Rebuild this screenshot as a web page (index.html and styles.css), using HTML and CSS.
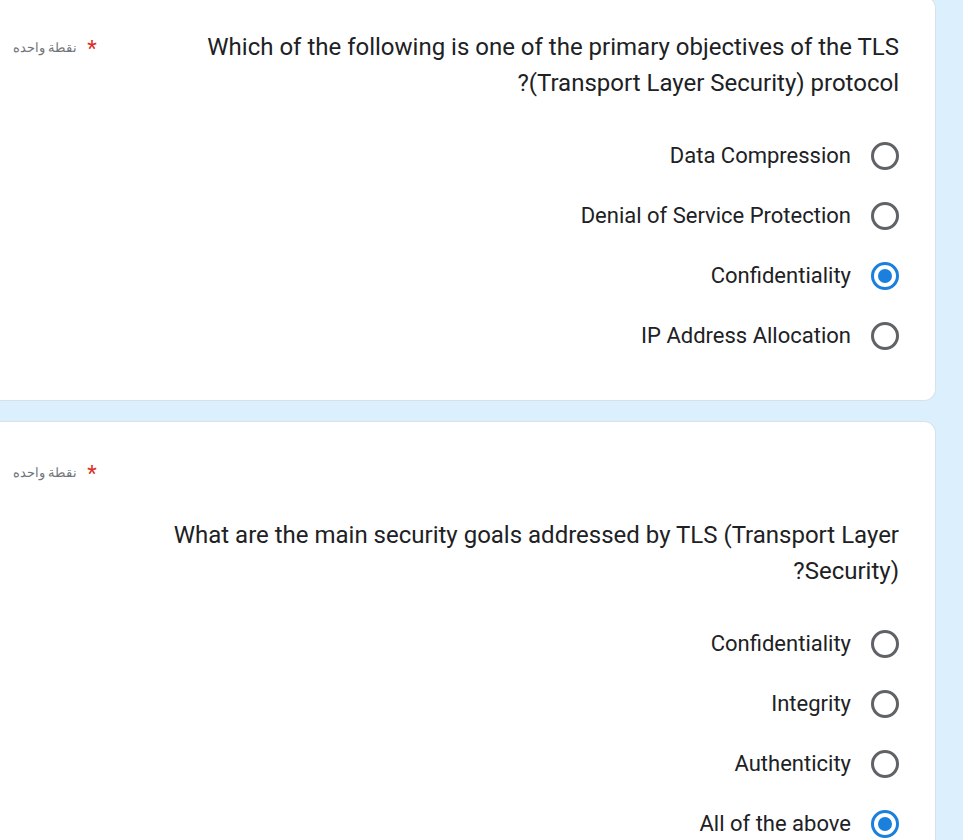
FILE: index.html
```html
<!DOCTYPE html>
<html lang="ar" dir="rtl">
<head>
<meta charset="utf-8">
<link rel="stylesheet" href="styles.css">
</head>
<body>
<main class="page">
  <section class="card card-first">
    <div class="q-header">
      <div class="q-title">Which of the following is one of the primary objectives of the TLS (Transport Layer Security) protocol?</div>
      <div class="q-points"><span class="star">*</span><span class="pts">نقطة واحده</span></div>
    </div>
    <div class="options">
      <label class="opt"><span class="radio"></span><span class="opt-text">Data Compression</span></label>
      <label class="opt"><span class="radio"></span><span class="opt-text">Denial of Service Protection</span></label>
      <label class="opt"><span class="radio checked"></span><span class="opt-text">Confidentiality</span></label>
      <label class="opt"><span class="radio"></span><span class="opt-text">IP Address Allocation</span></label>
    </div>
  </section>
  <section class="card">
    <div class="q-header">
      <div class="q-title"></div>
      <div class="q-points"><span class="star">*</span><span class="pts">نقطة واحده</span></div>
    </div>
    <div class="q-title q-title-block">What are the main security goals addressed by TLS (Transport Layer Security)?</div>
    <div class="options">
      <label class="opt"><span class="radio"></span><span class="opt-text">Confidentiality</span></label>
      <label class="opt"><span class="radio"></span><span class="opt-text">Integrity</span></label>
      <label class="opt"><span class="radio"></span><span class="opt-text">Authenticity</span></label>
      <label class="opt"><span class="radio checked"></span><span class="opt-text">All of the above</span></label>
    </div>
  </section>
</main>
</body>
</html>
```
FILE: styles.css
```css
html, body {
  margin: 0;
  padding: 0;
}
body {
  background: #dbeffc;
  font-family: Roboto, "Noto Sans", sans-serif;
  color: #202124;
  overflow: hidden;
  height: 840px;
}
.page {
  padding-right: 27px;
  display: flex;
  flex-direction: column;
  gap: 20px;
  width: 963px;
  box-sizing: border-box;
}
.card {
  background: #fff;
  border: 1px solid #d6e2ea;
  border-left: none;
  border-radius: 0 12px 12px 0;
  padding: 32px 36px 34px 13px;
}
.card-first {
  margin-top: -4px;
}
.q-header {
  display: flex;
  align-items: flex-start;
  justify-content: space-between;
  gap: 20px;
}
.q-title {
  font-size: 24px;
  line-height: 36px;
  width: 779px;
  text-align: right;
}
.q-title-block {
  margin-top: 27px;
  margin-right: 0;
  margin-left: auto;
}
.q-points {
  display: flex;
  align-items: center;
  gap: 10px;
  height: 36px;
  flex-shrink: 0;
}
.star {
  color: #d93025;
  font-size: 22px;
  line-height: 36px;
  padding-top: 4px;
}
.pts {
  font-size: 13px;
  color: #70757a;
}
.options {
  margin-top: 25px;
  display: flex;
  flex-direction: column;
}
.opt {
  display: flex;
  align-items: center;
  gap: 20px;
  height: 60px;
}
.radio {
  width: 28px;
  height: 28px;
  box-sizing: border-box;
  border: 3px solid #5f6368;
  border-radius: 50%;
  display: flex;
  align-items: center;
  justify-content: center;
  flex-shrink: 0;
}
.radio.checked {
  border-color: #1a7fdd;
}
.radio.checked::after {
  content: "";
  width: 14px;
  height: 14px;
  border-radius: 50%;
  background: #1a7fdd;
}
.opt-text {
  font-size: 22px;
  line-height: 28px;
}
```
